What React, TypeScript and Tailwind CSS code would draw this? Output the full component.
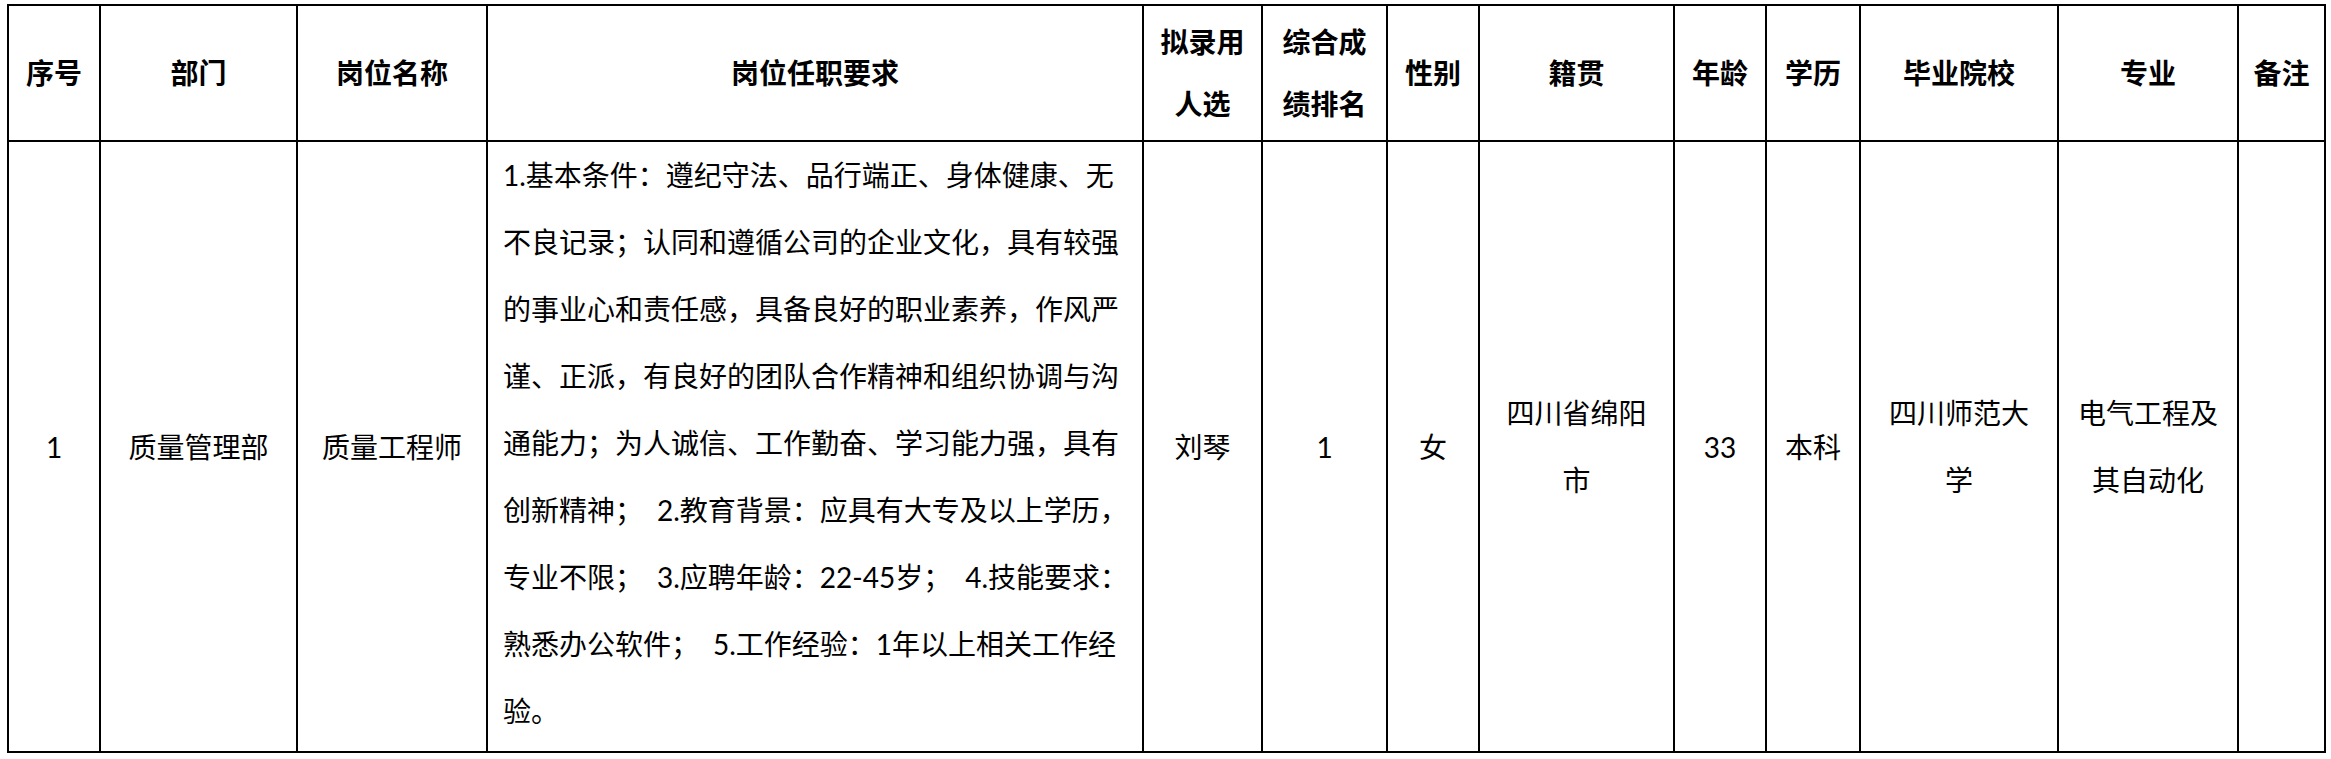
import React from "react";

const widths = [92, 197, 190, 656, 119, 125, 92, 195, 92, 94, 198, 180, 87];

const cell = "border-2 border-black p-0 text-center align-middle";

export default function App() {
  const reqLines: React.ReactNode[] = [
    "1.基本条件：遵纪守法、品行端正、身体健康、无",
    "不良记录；认同和遵循公司的企业文化，具有较强",
    "的事业心和责任感，具备良好的职业素养，作风严",
    "谨、正派，有良好的团队合作精神和组织协调与沟",
    "通能力；为人诚信、工作勤奋、学习能力强，具有",
    <>
      创新精神；<span className="pl-[14px]">2.教育背景：应具有大专及以上学历，</span>
    </>,
    <>
      专业不限；<span className="pl-[14px]">3.应聘年龄：22-45岁；</span>
      <span className="pl-[14px]">4.技能要求：</span>
    </>,
    <>
      熟悉办公软件；<span className="pl-[14px]">5.工作经验：1年以上相关工作经</span>
    </>,
    "验。",
  ];

  return (
    <div className="min-h-[759px] w-[2331px] bg-white">
      <table className="ml-[7px] mt-[4px] w-[2319px] table-fixed border-collapse font-['Lato','Noto_Sans_CJK_SC',sans-serif] text-[28px] text-black">
        <colgroup>
          {widths.map((w, i) => (
            <col key={i} style={{ width: w }} />
          ))}
        </colgroup>
        <thead>
          <tr className="h-[136px]">
            <th className={`${cell} font-bold`}>序号</th>
            <th className={`${cell} font-bold`}>部门</th>
            <th className={`${cell} font-bold`}>岗位名称</th>
            <th className={`${cell} font-bold`}>岗位任职要求</th>
            <th className={`${cell} font-bold leading-[62px]`}>
              拟录用
              <br />
              人选
            </th>
            <th className={`${cell} font-bold leading-[62px]`}>
              综合成
              <br />
              绩排名
            </th>
            <th className={`${cell} font-bold`}>性别</th>
            <th className={`${cell} font-bold`}>籍贯</th>
            <th className={`${cell} font-bold`}>年龄</th>
            <th className={`${cell} font-bold`}>学历</th>
            <th className={`${cell} font-bold`}>毕业院校</th>
            <th className={`${cell} font-bold`}>专业</th>
            <th className={`${cell} font-bold`}>备注</th>
          </tr>
        </thead>
        <tbody>
          <tr>
            <td className={cell}>1</td>
            <td className={cell}>质量管理部</td>
            <td className={cell}>质量工程师</td>
            <td className="border-2 border-black px-0 pb-[6px] pl-[15px] pt-0 text-left align-top leading-[67px]">
              {reqLines.map((l, i) => (
                <div key={i} className="whitespace-nowrap">
                  {l}
                </div>
              ))}
            </td>
            <td className={cell}>刘琴</td>
            <td className={cell}>1</td>
            <td className={cell}>女</td>
            <td className={`${cell} leading-[67px]`}>
              四川省绵阳
              <br />
              市
            </td>
            <td className={cell}>33</td>
            <td className={cell}>本科</td>
            <td className={`${cell} leading-[67px]`}>
              四川师范大
              <br />
              学
            </td>
            <td className={`${cell} leading-[67px]`}>
              电气工程及
              <br />
              其自动化
            </td>
            <td className={cell}></td>
          </tr>
        </tbody>
      </table>
    </div>
  );
}
